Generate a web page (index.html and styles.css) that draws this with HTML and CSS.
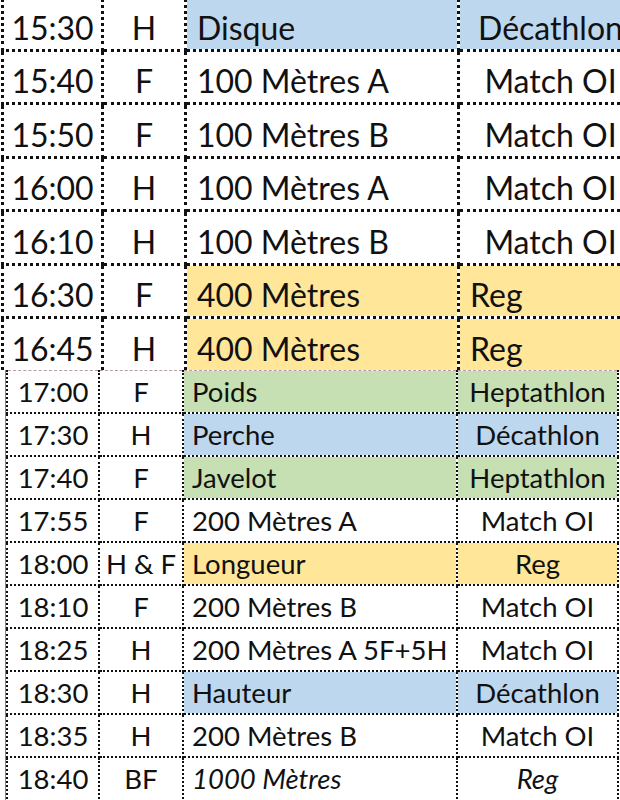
FILE: index.html
```html
<!DOCTYPE html>
<html lang="fr">
<head>
<meta charset="utf-8">
<title>Horaire</title>
<link rel="stylesheet" href="styles.css">
</head>
<body>
<div class="sheet">
  <div class="part part-top">
    <table class="grid grid-top">
      <colgroup><col class="c1"><col class="c2"><col class="c3"><col class="c4"></colgroup>
      <tr><td class="time">15:30</td><td class="sex">H</td><td class="ev blue">Disque</td><td class="cat blue center">Décathlon</td></tr>
      <tr><td class="time">15:40</td><td class="sex">F</td><td class="ev">100 Mètres A</td><td class="cat center">Match OI</td></tr>
      <tr><td class="time">15:50</td><td class="sex">F</td><td class="ev">100 Mètres B</td><td class="cat center">Match OI</td></tr>
      <tr><td class="time">16:00</td><td class="sex">H</td><td class="ev">100 Mètres A</td><td class="cat center">Match OI</td></tr>
      <tr><td class="time">16:10</td><td class="sex">H</td><td class="ev">100 Mètres B</td><td class="cat center">Match OI</td></tr>
      <tr><td class="time">16:30</td><td class="sex">F</td><td class="ev orange">400 Mètres</td><td class="cat orange">Reg</td></tr>
      <tr><td class="time">16:45</td><td class="sex">H</td><td class="ev orange">400 Mètres</td><td class="cat orange">Reg</td></tr>
    </table>
  </div>
  <div class="part part-bottom">
    <table class="grid grid-bottom">
      <colgroup><col class="c1"><col class="c2"><col class="c3"><col class="c4"></colgroup>
      <tr><td class="time">17:00</td><td class="sex">F</td><td class="ev green">Poids</td><td class="cat green center">Heptathlon</td></tr>
      <tr><td class="time">17:30</td><td class="sex">H</td><td class="ev blue">Perche</td><td class="cat blue center">Décathlon</td></tr>
      <tr><td class="time">17:40</td><td class="sex">F</td><td class="ev green">Javelot</td><td class="cat green center">Heptathlon</td></tr>
      <tr><td class="time">17:55</td><td class="sex">F</td><td class="ev">200 Mètres A</td><td class="cat center">Match OI</td></tr>
      <tr><td class="time">18:00</td><td class="sex">H &amp; F</td><td class="ev orange">Longueur</td><td class="cat orange center">Reg</td></tr>
      <tr><td class="time">18:10</td><td class="sex">F</td><td class="ev">200 Mètres B</td><td class="cat center">Match OI</td></tr>
      <tr><td class="time">18:25</td><td class="sex">H</td><td class="ev">200 Mètres A 5F+5H</td><td class="cat center">Match OI</td></tr>
      <tr><td class="time">18:30</td><td class="sex">H</td><td class="ev blue">Hauteur</td><td class="cat blue center">Décathlon</td></tr>
      <tr><td class="time">18:35</td><td class="sex">H</td><td class="ev">200 Mètres B</td><td class="cat center">Match OI</td></tr>
      <tr><td class="time">18:40</td><td class="sex">BF</td><td class="ev italic">1000 Mètres</td><td class="cat center italic">Reg</td></tr>
    </table>
  </div>
</div>
</body>
</html>
```
FILE: styles.css
```css
html, body {
  margin: 0;
  padding: 0;
  background: #ffffff;
}
body {
  width: 620px;
  height: 800px;
  overflow: hidden;
  font-family: "Lato", "Open Sans", sans-serif;
  color: #111111;
}
.sheet {
  width: 620px;
  height: 800px;
  overflow: hidden;
}
.part {
  overflow: hidden;
}
.part-top {
  height: 370px;
  padding-left: 1px;
}
.part-bottom {
  height: 430px;
  margin-left: 5px;
  border-left: 1px solid #e0607a;
}
.grid {
  border-collapse: collapse;
  table-layout: fixed;
}
.grid td {
  border: 2px dotted #111111;
  padding: 0;
  white-space: nowrap;
  overflow: hidden;
  line-height: 1;
}
.grid-top {
  width: 640px;
  margin-top: -2px;
  font-size: 32px;
}
.grid-top .c1 { width: 100px; }
.grid-top .c2 { width: 83px; }
.grid-top .c3 { width: 273px; }
.grid-top .c4 { width: 184px; }
.grid-top td {
  height: 45.5px;
  border-width: 3px;
  vertical-align: bottom;
  padding-bottom: 5px;
}
.grid-top tr:first-child td {
  border-top: none;
}
.grid-top tr:last-child td {
  border-bottom: none;
}
.grid-bottom {
  width: 611px;
  font-size: 27.5px;
}
.grid-bottom .c1 { width: 92px; }
.grid-bottom .c2 { width: 84px; }
.grid-bottom .c3 { width: 274px; }
.grid-bottom .c4 { width: 161px; }
.grid-bottom td {
  height: 34px;
  vertical-align: bottom;
  padding-bottom: 7px;
}
.grid-bottom tr:first-child td {
  border-top: 1px dashed #b89aa2;
}
.grid-bottom tr:last-child td {
  border-bottom: none;
}
.time, .sex {
  text-align: center;
}
.ev {
  text-align: left;
  padding-left: 10px !important;
}
.grid-bottom .ev {
  padding-left: 8px !important;
}
.cat {
  text-align: left;
  padding-left: 10px !important;
}
.cat.center {
  text-align: center;
  padding-left: 0 !important;
}
.italic {
  font-style: italic;
}
.blue { background: #bdd7ee; }
.orange { background: #ffe699; }
.green { background: #c6e0b4; }
```
